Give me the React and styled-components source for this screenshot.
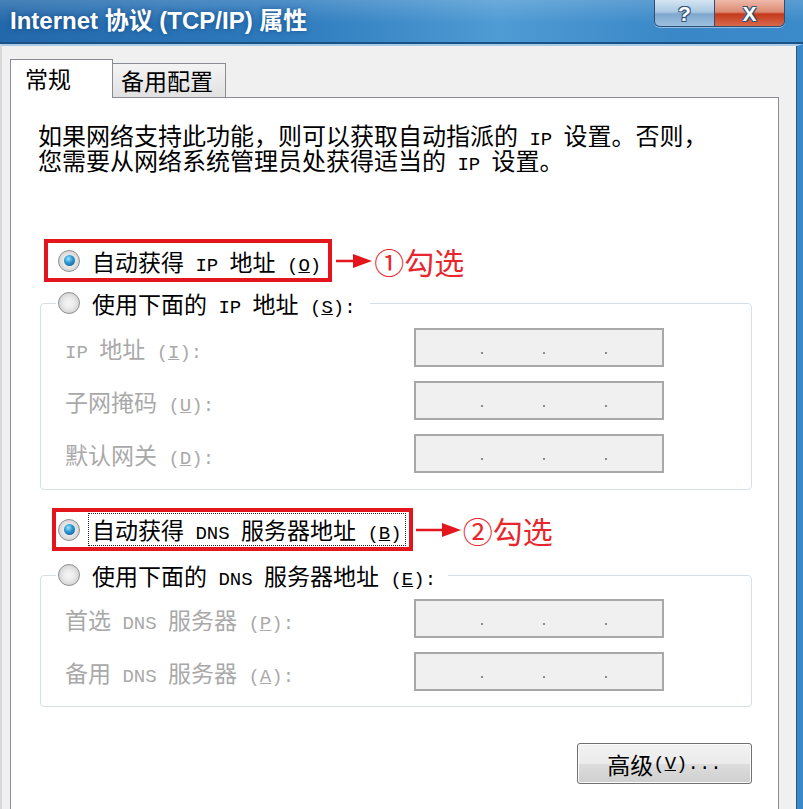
import React from 'react'
import styled, { createGlobalStyle } from 'styled-components'

const GlobalStyle = createGlobalStyle`
  html, body {
    margin: 0;
    padding: 0;
    background: #f0f0f0;
  }
  body {
    font-family: "Noto Sans CJK SC", "Noto Sans", sans-serif;
  }
`

const Window = styled.div`
  width: 803px;
  height: 809px;
  display: flex;
  flex-direction: column;
  overflow: hidden;
  background: #f0f0f0;
`

const TitleBar = styled.div`
  height: 42px;
  flex: none;
  display: flex;
  align-items: flex-start;
  background:
    linear-gradient(180deg, rgba(255,255,255,0.16) 0%, rgba(255,255,255,0) 55%),
    linear-gradient(90deg, #2368aa 0%, #2d7abd 35%, #4f9bd4 62%, #3a87c7 85%, #3b8ac9 100%);
  border-bottom: 2px solid #1b5285;
`

const TitleText = styled.div`
  margin: 9px 0 0 10px;
  color: #fff;
  font: 700 24px/24px "Liberation Sans", "Noto Sans CJK SC", sans-serif;
  text-shadow: 0 0 5px rgba(10, 50, 100, 0.55);
  white-space: nowrap;
`

const CaptionButtons = styled.div`
  margin-left: auto;
  margin-right: 18px;
  display: flex;
  height: 26px;
  border: 1px solid #2d4f73;
  border-top: none;
  border-radius: 0 0 6px 6px;
  overflow: hidden;
  box-shadow: 0 1px 0 rgba(255, 255, 255, 0.45);
`

const CapBtn = styled.div`
  width: ${p => (p.$close ? 69 : 59)}px;
  display: flex;
  align-items: center;
  justify-content: center;
  color: #fff;
  font: 700 21px/1 "Liberation Sans", sans-serif;
  text-shadow: 1px 1px 0 #34557a, -1px -1px 0 #34557a, 1px -1px 0 #34557a, -1px 1px 0 #34557a;
  border-left: ${p => (p.$close ? '1px solid #2d4f73' : 'none')};
  background: ${p =>
    p.$close
      ? 'linear-gradient(180deg, #efb9a9 0%, #dc8b74 46%, #c4391c 54%, #d9694a 100%)'
      : 'linear-gradient(180deg, #d5e5f3 0%, #a9c7e2 46%, #7ea7cd 54%, #9cc0e0 100%)'};
`

const Body = styled.div`
  flex: 1;
  display: flex;
  flex-direction: column;
  padding: 13px 18px 0 8px;
  border-top: 2px solid #a9cbe8;
  border-left: 2px solid #d9d9d9;
  border-right: 6px solid #3b88c8;
  box-shadow: inset -1px 0 0 #1f5a8f;
`

const TabStrip = styled.div`
  display: flex;
  align-items: flex-end;
  margin-bottom: -1px;
  position: relative;
  z-index: 1;
`

const Tab = styled.div`
  box-sizing: border-box;
  width: ${p => (p.$active ? 103 : 113)}px;
  height: ${p => (p.$active ? 39 : 35)}px;
  padding-left: ${p => (p.$active ? 14 : 8)}px;
  padding-top: ${p => (p.$active ? 4 : 2)}px;
  border: 1px solid #898c95;
  border-bottom: ${p => (p.$active ? 'none' : '1px solid #898c95')};
  border-left: ${p => (p.$active ? '1px solid #898c95' : 'none')};
  background: ${p => (p.$active ? '#fff' : 'linear-gradient(180deg, #f4f4f4, #e1e1e1)')};
  font-size: 23px;
  line-height: 28px;
  color: #000;
`

const Panel = styled.div`
  flex: 1;
  display: flex;
  flex-direction: column;
  align-items: flex-start;
  padding: 24px 26px 0 29px;
  background: #fff;
  border: 1px solid #898c95;
  border-bottom: none;
`

const Description = styled.div`
  margin-left: -2px;
  color: #000;
`

const DescLine = styled.div`
  height: 25px;
  font-size: 24px;
  line-height: 25px;
  white-space: nowrap;
`

const Lat = styled.span`
  font-family: "Liberation Mono", "DejaVu Sans Mono", monospace;
  font-size: 19px;
  line-height: 0;
`

const AnnotRow = styled.div`
  display: flex;
  align-items: center;
  margin-top: ${p => p.$top}px;
  margin-left: ${p => p.$left}px;
`

const RedBox = styled.div`
  box-sizing: border-box;
  height: 43px;
  display: flex;
  align-items: center;
  border: 4px solid #e3161d;
  padding: 0 ${p => p.$right}px 0 ${p => p.$left}px;
`

const Option = styled.label`
  display: flex;
  align-items: center;
  gap: ${p => p.$gap || 12}px;
  font-size: 23px;
  line-height: 28px;
  color: #000;
  white-space: nowrap;
`

const Radio = styled.span`
  width: 22px;
  height: 22px;
  flex: none;
  box-sizing: border-box;
  border-radius: 50%;
  border: 1px solid #8e8f8f;
  background: radial-gradient(circle at 50% 50%, #f7f7f7 0, #ececec 5px, #d6d6d6 10px);
  display: flex;
  align-items: center;
  justify-content: center;

  &::after {
    content: '';
    display: ${p => (p.$checked ? 'block' : 'none')};
    width: 11px;
    height: 11px;
    border-radius: 50%;
    background: radial-gradient(circle at 40% 35%, #a6e4ff 0, #2d9bd5 40%, #0c4d84 100%);
  }
`

const Focus = styled.span`
  border: 1px dotted #222;
  padding: 0 3px;
  line-height: 31px;
`

const Arrow = styled.svg`
  flex: none;
  margin-left: ${p => p.$gap}px;
`

const AnnotText = styled.span`
  margin-left: 2px;
  color: #e8262d;
  font-size: 30px;
  line-height: 34px;
  white-space: nowrap;
`

const Group = styled.fieldset`
  box-sizing: border-box;
  width: 712px;
  min-inline-size: 0;
  margin: ${p => p.$top}px 0 0 0;
  padding: 0;
  border: 1px solid #d5dfe5;
  border-radius: 4px;
`

const GroupLegend = styled.legend`
  margin-left: 15px;
  padding: 0 ${p => p.$right}px 0 2px;
`

const FieldGrid = styled.div`
  display: grid;
  grid-template-columns: 349px 250px;
  row-gap: 14px;
  align-items: center;
  margin: ${p => p.$top}px 0 ${p => p.$bottom}px 24px;
`

const FieldLabel = styled.div`
  font-size: 23px;
  line-height: 28px;
  color: #a9a9a9;
  white-space: nowrap;
`

const IpBox = styled.div`
  box-sizing: border-box;
  height: 39px;
  display: flex;
  align-items: flex-end;
  gap: 60px;
  padding: 0 0 11px 65px;
  border: 2px solid #a8a8a8;
  background: #f0f0f0;
`

const Dot = styled.span`
  width: 2px;
  height: 2px;
  background: #8a8a8a;
`

const Button = styled.div`
  box-sizing: border-box;
  align-self: flex-end;
  width: 175px;
  height: 41px;
  margin-top: 36px;
  display: flex;
  align-items: center;
  justify-content: center;
  border: 1px solid #707070;
  border-radius: 3px;
  background: linear-gradient(180deg, #f2f2f2 0%, #ebebeb 50%, #dddddd 51%, #cfcfcf 100%);
  box-shadow: inset 0 0 0 1px #fcfcfc;
  font-size: 23px;
  line-height: 28px;
  color: #000;
  white-space: nowrap;
`

const ArrowIcon = ({ width, gap }) => (
  <Arrow $gap={gap} width={width} height="20" viewBox={`0 0 ${width} 20`}>
    <line x1="0" y1="10" x2={width - 16} y2="10" stroke="#e3161d" strokeWidth="2.5" />
    <polygon points={`${width - 19},3 ${width},10 ${width - 19},17`} fill="#e3161d" />
  </Arrow>
)

const IpField = () => (
  <IpBox>
    <Dot />
    <Dot />
    <Dot />
  </IpBox>
)

const Key = ({ k }) => (
  <Lat>
    (<u>{k}</u>)
  </Lat>
)

export default function App() {
  return (
    <>
      <GlobalStyle />
      <Window>
        <TitleBar>
          <TitleText>Internet 协议 (TCP/IP) 属性</TitleText>
          <CaptionButtons>
            <CapBtn>?</CapBtn>
            <CapBtn $close>X</CapBtn>
          </CaptionButtons>
        </TitleBar>
        <Body>
          <TabStrip>
            <Tab $active>常规</Tab>
            <Tab>备用配置</Tab>
          </TabStrip>
          <Panel>
            <Description>
              <DescLine>
                如果网络支持此功能，则可以获取自动指派的<Lat> IP </Lat>设置。否则，
              </DescLine>
              <DescLine>
                您需要从网络系统管理员处获得适当的<Lat> IP </Lat>设置。
              </DescLine>
            </Description>

            <AnnotRow $top={67} $left={4}>
              <RedBox $left={10} $right={7}>
                <Option>
                  <Radio $checked />
                  <span>
                    自动获得<Lat> IP </Lat>地址<Lat> </Lat>
                    <Key k="O" />
                  </span>
                </Option>
              </RedBox>
              <ArrowIcon width={36} gap={4} />
              <AnnotText>①勾选</AnnotText>
            </AnnotRow>

            <Group $top={7}>
              <GroupLegend $right={14}>
                <Option>
                  <Radio />
                  <span>
                    使用下面的<Lat> IP </Lat>地址<Lat> </Lat>
                    <Key k="S" />
                    <Lat>:</Lat>
                  </span>
                </Option>
              </GroupLegend>
              <FieldGrid $top={11} $bottom={16}>
                <FieldLabel>
                  <Lat>IP </Lat>地址<Lat> </Lat>
                  <Key k="I" />
                  <Lat>:</Lat>
                </FieldLabel>
                <IpField />
                <FieldLabel>
                  子网掩码<Lat> </Lat>
                  <Key k="U" />
                  <Lat>:</Lat>
                </FieldLabel>
                <IpField />
                <FieldLabel>
                  默认网关<Lat> </Lat>
                  <Key k="D" />
                  <Lat>:</Lat>
                </FieldLabel>
                <IpField />
              </FieldGrid>
            </Group>

            <AnnotRow $top={18} $left={12}>
              <RedBox $left={2} $right={3}>
                <Option $gap={8}>
                  <Radio $checked />
                  <Focus>
                    自动获得<Lat> DNS </Lat>服务器地址<Lat> </Lat>
                    <Key k="B" />
                  </Focus>
                </Option>
              </RedBox>
              <ArrowIcon width={45} gap={3} />
              <AnnotText>②勾选</AnnotText>
            </AnnotRow>

            <Group $top={10}>
              <GroupLegend $right={12}>
                <Option>
                  <Radio />
                  <span>
                    使用下面的<Lat> DNS </Lat>服务器地址<Lat> </Lat>
                    <Key k="E" />
                    <Lat>:</Lat>
                  </span>
                </Option>
              </GroupLegend>
              <FieldGrid $top={10} $bottom={15}>
                <FieldLabel>
                  首选<Lat> DNS </Lat>服务器<Lat> </Lat>
                  <Key k="P" />
                  <Lat>:</Lat>
                </FieldLabel>
                <IpField />
                <FieldLabel>
                  备用<Lat> DNS </Lat>服务器<Lat> </Lat>
                  <Key k="A" />
                  <Lat>:</Lat>
                </FieldLabel>
                <IpField />
              </FieldGrid>
            </Group>

            <Button>
              高级<Lat> </Lat>
              <Key k="V" />
              <Lat>...</Lat>
            </Button>
          </Panel>
        </Body>
      </Window>
    </>
  )
}
